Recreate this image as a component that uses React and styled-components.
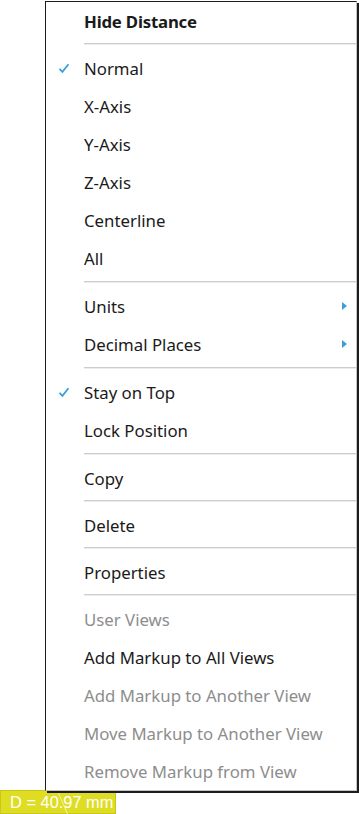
import React from "react";
import styled, { createGlobalStyle } from "styled-components";

const Global = createGlobalStyle`
  html, body { margin: 0; padding: 0; background: #ffffff; }
  body { font-family: "Noto Sans", "Open Sans", sans-serif; }
`;

const Page = styled.div`
  width: 359px;
  height: 814px;
  overflow: hidden;
  display: flex;
  flex-direction: column;
  background: #ffffff;
`;

const Menu = styled.div`
  margin: 1px 0 0 45px;
  width: 312px;
  box-sizing: border-box;
  background: #ffffff;
  border-left: 1px solid #1c1c1c;
  border-top: 1px solid #1c1c1c;
  border-right: 1px solid #c4c4c4;
  border-bottom: 1px solid #c4c4c4;
  box-shadow: 2px 2px 0 #1c1c1c;
  display: flex;
  flex-direction: column;
  position: relative;
  z-index: 1;
`;

const Item = styled.div`
  height: 38px;
  flex: none;
  display: flex;
  align-items: center;
  position: relative;
  padding-left: 38px;
  font-size: 16.8px;
  font-weight: ${(p) => (p.$bold ? 700 : 400)};
  color: ${(p) => (p.$disabled ? "#8d8d8d" : "#1a1a1a")};
  white-space: nowrap;
  letter-spacing: ${(p) => (p.$bold ? "-0.2px" : "0")};
`;

const Check = styled.svg`
  position: absolute;
  left: 12px;
  top: 50%;
  margin-top: -5px;
`;

const Arrow = styled.svg`
  position: absolute;
  right: 9px;
  top: 50%;
  margin-top: -4px;
`;

const Separator = styled.div`
  height: ${(p) => (p.$tall ? 10 : 9)}px;
  flex: none;
  display: flex;
  align-items: flex-start;
  padding: ${(p) => (p.$tall ? 4 : 3)}px 0 0 38px;
  box-sizing: border-box;
  &::after {
    content: "";
    flex: 1;
    height: 1px;
    background: #cdcdcd;
    box-shadow: 0 1px 0 #ececec;
  }
`;

const Label = styled.div`
  margin-top: -1px;
  width: 116px;
  height: 24px;
  box-sizing: border-box;
  background: #dedd24;
  border: 1px solid #c9c814;
  color: #ffffff;
  font-family: "Liberation Sans", Arial, sans-serif;
  font-size: 16.4px;
  display: flex;
  align-items: center;
  padding-left: 9px;
  position: relative;
`;

const Leader = styled.svg`
  position: absolute;
  left: 54px;
  top: -1px;
`;

const CheckMark = () => (
  <Check width="12" height="11" viewBox="0 0 12 11">
    <path d="M1.5 5.8 L4.4 8.8 L10.5 1.2" fill="none" stroke="#3a9fde" strokeWidth="1.8" />
  </Check>
);

const SubArrow = () => (
  <Arrow width="5" height="8" viewBox="0 0 5 8">
    <path d="M0 0 L5 4 L0 8 Z" fill="#3a9fde" />
  </Arrow>
);

const rows = [
  { t: "Hide Distance", bold: true },
  { sep: true },
  { t: "Normal", check: true },
  { t: "X-Axis" },
  { t: "Y-Axis" },
  { t: "Z-Axis" },
  { t: "Centerline" },
  { t: "All" },
  { sep: true, tall: true },
  { t: "Units", sub: true },
  { t: "Decimal Places", sub: true },
  { sep: true, tall: true },
  { t: "Stay on Top", check: true },
  { t: "Lock Position" },
  { sep: true, tall: true },
  { t: "Copy" },
  { sep: true },
  { t: "Delete" },
  { sep: true },
  { t: "Properties" },
  { sep: true },
  { t: "User Views", disabled: true },
  { t: "Add Markup to All Views" },
  { t: "Add Markup to Another View", disabled: true },
  { t: "Move Markup to Another View", disabled: true },
  { t: "Remove Markup from View", disabled: true },
];

export default function App() {
  return (
    <Page>
      <Global />
      <Menu>
        {rows.map((r, i) =>
          r.sep ? (
            <Separator key={i} $tall={r.tall} />
          ) : (
            <Item key={i} $bold={r.bold} $disabled={r.disabled}>
              {r.check && <CheckMark />}
              {r.t}
              {r.sub && <SubArrow />}
            </Item>
          )
        )}
      </Menu>
      <Label>
        D = 40.97 mm
        <Leader width="16" height="25" viewBox="0 0 16 25">
          <path d="M2 0 L13 25" stroke="#f4f39a" strokeWidth="1" fill="none" />
        </Leader>
      </Label>
    </Page>
  );
}
